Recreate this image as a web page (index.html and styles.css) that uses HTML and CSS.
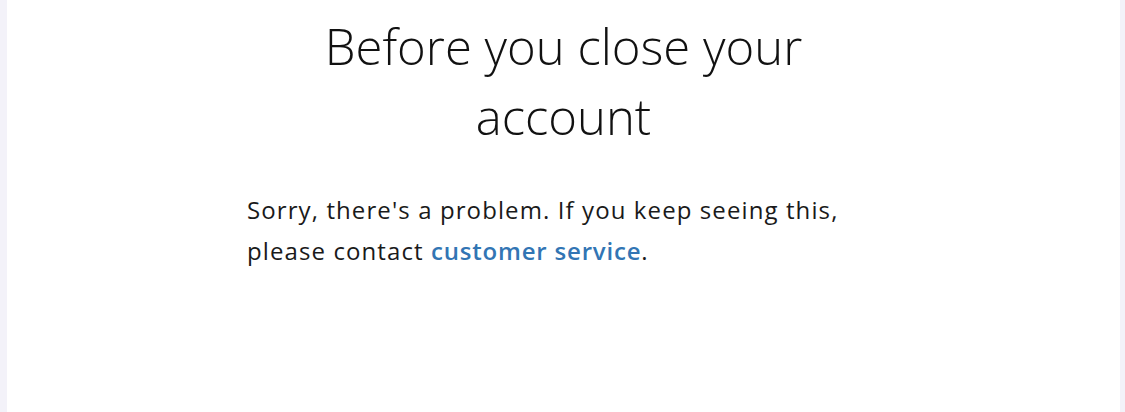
FILE: index.html
```html
<!DOCTYPE html>
<html lang="en">
<head>
  <meta charset="UTF-8">
  <meta name="viewport" content="width=device-width, initial-scale=1.0">
  <title>Before you close your account</title>
  <link rel="stylesheet" href="styles.css">
</head>
<body>
  <div class="page">
    <main class="content">
      <h1>Before you close your<br>account</h1>
      <p class="message">
        Sorry, there's a problem. If you keep seeing this,<br>
        please contact <a href="#">customer service</a>.
      </p>
    </main>
  </div>
</body>
</html>
```

FILE: styles.css
```css
html, body {
  margin: 0;
  padding: 0;
  height: 100%;
}
body {
  background-color: #f3f2f9; /* side strips */
  font-family: "Open Sans", sans-serif;
  color: #1a1a1a;
}
.page {
  margin: 0 5px 0 7px;
  height: 100%;
  background-color: #fff;
  display: flex;
  justify-content: center;
}
.content {
  width: 633px;
  padding-top: 11px;
}
h1 {
  margin: 0;
  text-align: center;
  font-weight: 300;
  font-size: 49px;
  line-height: 70px;
  color: #111;
}
.message {
  margin: 38px 0 0;
  font-size: 24px;
  line-height: 41px;
  letter-spacing: 1.1px;
  color: #1a1a1a;
}
.message a {
  color: #3275b4;
  font-weight: 600;
  letter-spacing: 0.8px;
  text-decoration: none;
}
```
